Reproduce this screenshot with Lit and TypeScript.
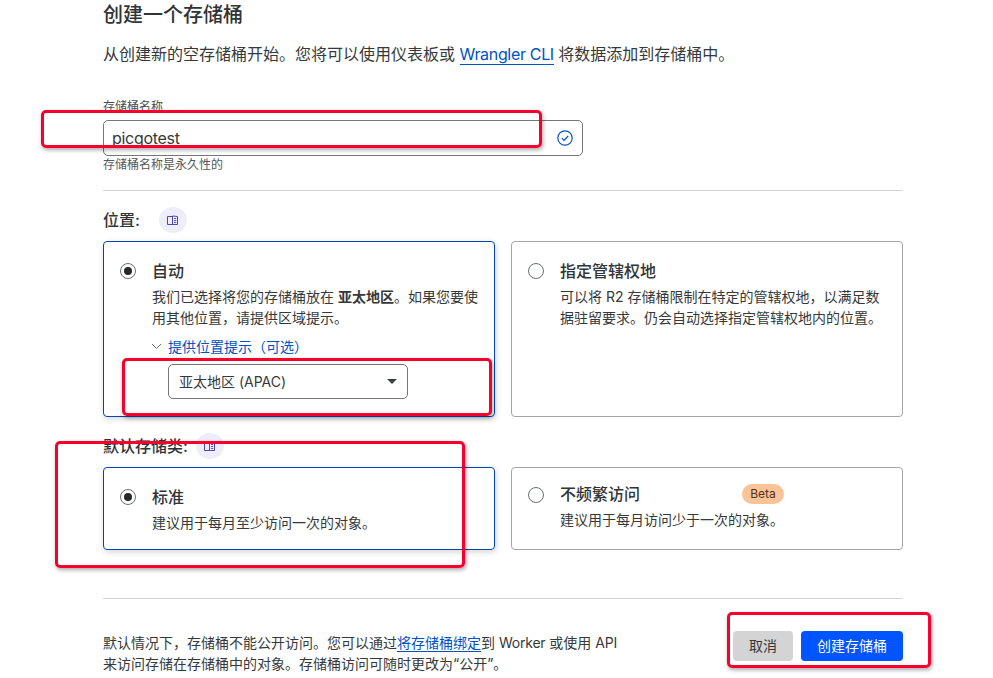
import { LitElement, html, css } from "lit";
import { customElement } from "lit/decorators.js";

const bookIcon = html`<svg class="book" viewBox="0 0 11 10" width="11" height="10" fill="none" stroke="currentColor" stroke-width="1"><path d="M.5 1.5h5v8h-5zM5.5 1l5 .5v8h-5z"/><path d="M7 3.5h2.2M7 5.5h2.2M7 7.5h2.2" stroke-width=".9"/></svg>`;

@customElement("app-root")
export class AppRoot extends LitElement {
  static styles = css`
    :host {
      display: block;
      position: relative;
      width: 993px;
      height: 678px;
      overflow: hidden;
      background: #fff;
      color: #36393a;
      font-family: Inter, "Noto Sans CJK SC", sans-serif;
    }
    .page { width: 800px; margin-left: 103px; display: flex; flex-direction: column; }
    h1 { margin: 0; padding-top: 1px; font-size: 20px; line-height: 28px; font-weight: 500; color: #313436; }
    .intro { margin: 13px 0 0; font-size: 16px; line-height: 24px; white-space: nowrap; }
    a { color: #0051c3; text-decoration: none; border-bottom: 1px solid #0051c3; }
    .intro a { letter-spacing: -0.33px; }
    .label { margin-top: 33px; font-size: 12px; line-height: 16px; color: #4a4d4f; }
    .input {
      margin-top: 5px; width: 480px; height: 36px; box-sizing: border-box;
      border: 1px solid #74777a; border-radius: 5px; padding: 0 9px 0 8px;
      display: flex; align-items: center; justify-content: space-between;
      font-size: 16px; color: #36393a; letter-spacing: -0.3px;
    }
    .helper { padding-top: 1px; font-size: 12px; line-height: 16px; color: #55585a; }
    hr { border: 0; height: 1px; background: #d4d4d4; margin: 17px 0 0; width: 100%; }
    hr.wide { margin-top: 48px; }
    .heading { display: flex; align-items: center; height: 26px; margin-top: 16px; font-size: 16px; font-weight: 500; color: #313436; }
    .heading span.txt { line-height: 26px; }
    .circle {
      width: 28px; height: 26px; border-radius: 50%; background: #eeeefb; color: #4b45b5;
      display: flex; align-items: center; justify-content: center;
    }
    .heading.loc .circle { margin-left: 19px; }
    .heading.cls .circle { margin-left: 8px; }
    .cards { display: grid; grid-template-columns: 392px 392px; gap: 16px; margin-top: 8px; }
    .card {
      box-sizing: border-box; border: 1px solid #a3a5a7; border-radius: 4px;
      display: grid; grid-template-columns: 16px 1fr; column-gap: 16px;
      padding: 19px 17px 0 16px; font-size: 14px; line-height: 21px;
    }
    .card.on { border-color: #0045b5; box-shadow: 1px 2px 6px rgba(0,0,0,.16); }
    .tall { height: 176px; }
    .short { height: 83px; }
    .short.up { padding-top: 16px; }
    .radio {
      width: 16px; height: 16px; box-sizing: border-box; border: 1px solid #6d7072; border-radius: 50%;
      display: flex; align-items: center; justify-content: center; margin-top: 2px; background: #fff;
    }
    .short.up .radio { margin-top: 3px; }
    .on .radio::after { content: ""; width: 8px; height: 8px; border-radius: 50%; background: #26282a; }
    .title { font-size: 16px; line-height: 20px; font-weight: 500; color: #313436; display: flex; align-items: center; }
    .desc { margin-top: 5px; white-space: nowrap; }
    .desc b { font-weight: 600; }
    .hint { display: flex; align-items: center; margin: 8px 0 0 0; height: 21px; color: #0051c3; position: relative; left: -1px; }
    .hint svg { margin-right: 6px; }
    .select {
      margin: 7px 0 0 16px; width: 240px; height: 35px; box-sizing: border-box;
      border: 1px solid #74777a; border-radius: 5px; padding: 0 10px;
      display: flex; align-items: center; justify-content: space-between; font-size: 14px;
    }
    .caret { width: 0; height: 0; border-left: 5px solid transparent; border-right: 5px solid transparent; border-top: 5px solid #3c3f41; }
    .beta {
      margin-left: 102px; width: 42px; height: 20px; border-radius: 10px; background: #fbc498; color: #57301a;
      font-size: 12px; line-height: 20px; text-align: center; font-weight: 400;
    }
    .footer { display: flex; justify-content: space-between; margin-top: 32px; }
    .note { margin: 1px 0 0; font-size: 14px; line-height: 21px; white-space: nowrap; }
    .latin { letter-spacing: -0.22px; }
    .actions { display: flex; gap: 8px; }
    .btn { height: 30px; border-radius: 4px; font-size: 14px; line-height: 30px; text-align: center; }
    .cancel { width: 60px; background: #d4d4d4; color: #36393a; }
    .create { width: 102px; background: #0055ff; color: #fff; }
    .mark {
      position: absolute; box-sizing: border-box; border: 3px solid #f7002e; border-radius: 5px;
      box-shadow: 1px 2px 4px rgba(0,0,0,.35); pointer-events: none;
    }
    .m1 { left: 41px; top: 110px; width: 501px; height: 38px; }
    .m2 { left: 122px; top: 358px; width: 370px; height: 58px; }
    .m3 { left: 55px; top: 441px; width: 410px; height: 127px; }
    .m4 { left: 727px; top: 612px; width: 204px; height: 56px; }
  `;

  render() {
    return html`
      <div class="page">
        <h1>创建一个存储桶</h1>
        <p class="intro">从创建新的空存储桶开始。您将可以使用仪表板或 <a>Wrangler CLI</a> 将数据添加到存储桶中。</p>
        <div class="label">存储桶名称</div>
        <div class="input">
          <span>picgotest</span>
          <svg width="16" height="16" viewBox="0 0 16 16" fill="none" stroke="#0051c3" stroke-width="1.2"><circle cx="8" cy="8" r="7.2"/><path d="M4.8 8.2l2.2 2.2 4.2-4.4"/></svg>
        </div>
        <div class="helper">存储桶名称是永久性的</div>
        <hr />
        <div class="heading loc"><span class="txt">位置:</span><span class="circle">${bookIcon}</span></div>
        <div class="cards">
          <div class="card on tall">
            <span class="radio"></span>
            <div>
              <div class="title">自动</div>
              <div class="desc">我们已选择将您的存储桶放在 <b>亚太地区</b>。如果您要使<br />用其他位置，请提供区域提示。</div>
              <div class="hint">
                <svg width="11" height="7" viewBox="0 0 11 7" fill="none" stroke="#6d7072" stroke-width="1"><path d="M1 1l4.5 4.5L10 1"/></svg>
                提供位置提示（可选）
              </div>
              <div class="select"><span>亚太地区 (APAC)</span><span class="caret"></span></div>
            </div>
          </div>
          <div class="card tall">
            <span class="radio"></span>
            <div>
              <div class="title">指定管辖权地</div>
              <div class="desc">可以将 R2 存储桶限制在特定的管辖权地，以满足数<br />据驻留要求。仍会自动选择指定管辖权地内的位置。</div>
            </div>
          </div>
        </div>
        <div class="heading cls"><span class="txt">默认存储类:</span><span class="circle">${bookIcon}</span></div>
        <div class="cards">
          <div class="card on short">
            <span class="radio"></span>
            <div>
              <div class="title">标准</div>
              <div class="desc">建议用于每月至少访问一次的对象。</div>
            </div>
          </div>
          <div class="card short up">
            <span class="radio"></span>
            <div>
              <div class="title">不频繁访问<span class="beta">Beta</span></div>
              <div class="desc">建议用于每月访问少于一次的对象。</div>
            </div>
          </div>
        </div>
        <hr class="wide" />
        <div class="footer">
          <p class="note">默认情况下，存储桶不能公开访问。您可以通过<a>将存储桶绑定</a>到 <span class="latin">Worker</span> 或使用 <span class="latin">API</span><br />来访问存储在存储桶中的对象。存储桶访问可随时更改为“公开”。</p>
          <div class="actions">
            <div class="btn cancel">取消</div>
            <div class="btn create">创建存储桶</div>
          </div>
        </div>
      </div>
      <div class="mark m1"></div>
      <div class="mark m2"></div>
      <div class="mark m3"></div>
      <div class="mark m4"></div>
    `;
  }
}
